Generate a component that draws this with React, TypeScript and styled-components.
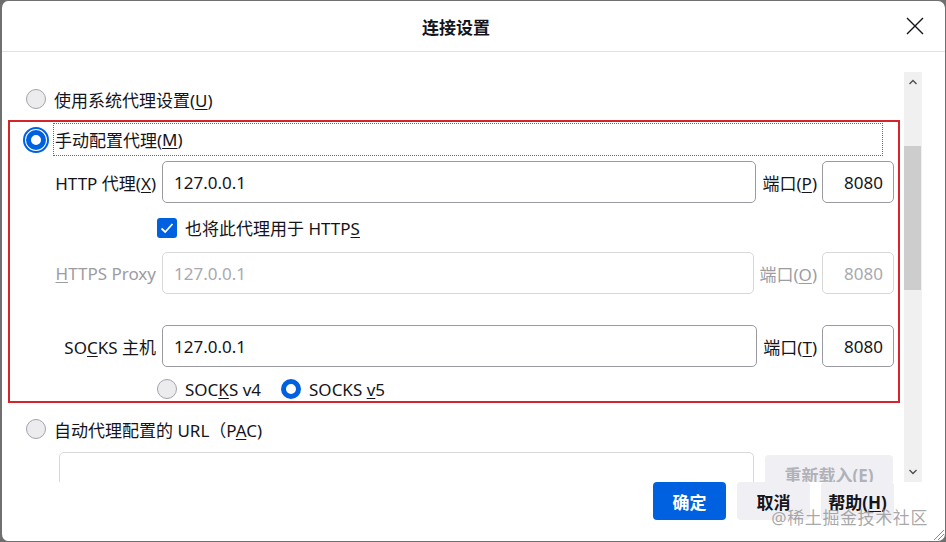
import styled, { createGlobalStyle } from 'styled-components';

const GlobalStyle = createGlobalStyle`
    html, body {
        margin: 0;
        padding: 0;
        background: #6e6e6e;
        overflow: hidden;
    }
    body {
        font-family: 'Noto Sans', 'Noto Sans CJK SC', sans-serif;
        font-size: 17px;
        color: #15141a;
    }
    * {
        box-sizing: border-box;
    }
    u {
        text-underline-offset: 2px;
    }
`;

const Dialog = styled.div`
    position: relative;
    width: 946px;
    height: 542px;
    background: #fff;
    border: 1px solid #707070;
    border-left-width: 2px;
    border-radius: 8px;
    display: flex;
    flex-direction: column;
    overflow: hidden;
`;

const Header = styled.header`
    height: 51px;
    flex-shrink: 0;
    display: flex;
    align-items: center;
    border-bottom: 1px solid #e0e0e6;
`;

const Title = styled.h1`
    flex: 1;
    margin: 0;
    padding-left: 6px;
    text-align: center;
    font-size: 17px;
    font-weight: 700;
`;

const CloseButton = styled.button`
    width: 22px;
    height: 22px;
    margin-right: 19px;
    padding: 0;
    border: none;
    background: none;
    display: flex;
    align-items: center;
    justify-content: center;
`;

const Main = styled.div`
    display: flex;
    margin-top: 20px;
    height: 410px;
    flex-shrink: 0;
`;

const Content = styled.div`
    flex: 1;
    overflow: hidden;
    padding: 12px 4px 0 6px;
`;

const Scrollbar = styled.div`
    width: 18px;
    margin-right: 23px;
    background: #f0f0f0;
    display: flex;
    flex-direction: column;
    align-items: stretch;
`;

const ScrollArrow = styled.div`
    height: 20px;
    display: flex;
    align-items: center;
    justify-content: center;
`;

const ScrollTrack = styled.div`
    flex: 1;
    padding: 54px 1px 0 0;
`;

const ScrollThumb = styled.div`
    height: 144px;
    background: #cdcdcd;
`;

const OptionRow = styled.div<{ $top?: number }>`
    display: flex;
    align-items: center;
    height: 30px;
    padding-left: 18px;
    margin-top: ${(p) => p.$top ?? 0}px;
    gap: 8px;
`;

const Radio = styled.span<{ $checked?: boolean; $focused?: boolean }>`
    width: 20px;
    height: 20px;
    flex-shrink: 0;
    border-radius: 50%;
    background: ${(p) => (p.$checked ? '#fff' : '#ececee')};
    border: ${(p) => (p.$checked ? '5px solid #0061e0' : '1px solid #a3a3ab')};
    outline: ${(p) => (p.$focused ? '2px solid #0061e0' : 'none')};
    outline-offset: 1px;
`;

const ManualBox = styled.section`
    margin-top: 6px;
    border: 2px solid #d3262c;
    padding: 1px 4px 0 16px;
`;

const FocusLabel = styled.label`
    flex: 1;
    margin-left: -1px;
    margin-right: 11px;
    height: 33px;
    padding-left: 1px;
    display: flex;
    align-items: center;
    border: 1px dotted #6a6a6a;
`;

const ManualRow = styled.div`
    display: flex;
    align-items: center;
    height: 33px;
    gap: 8px;
`;

const FieldRow = styled.div<{ $top?: number }>`
    display: flex;
    align-items: center;
    height: 42px;
    margin-top: ${(p) => p.$top ?? 0}px;
`;

const FieldLabel = styled.label<{ $disabled?: boolean }>`
    width: 130px;
    flex-shrink: 0;
    text-align: right;
    white-space: nowrap;
    color: ${(p) => (p.$disabled ? '#9c9ca3' : '#15141a')};
`;

const TextInput = styled.div<{ $disabled?: boolean }>`
    flex: 1;
    height: 42px;
    margin-left: 6px;
    padding-left: 11px;
    display: flex;
    align-items: center;
    border: 1px solid ${(p) => (p.$disabled ? '#d8d8dc' : '#9a9aa2')};
    border-radius: 5px;
    color: ${(p) => (p.$disabled ? '#a9a9b0' : '#15141a')};
`;

const PortLabel = styled.label<{ $disabled?: boolean }>`
    margin: 0 5px 0 6px;
    white-space: nowrap;
    color: ${(p) => (p.$disabled ? '#9c9ca3' : '#15141a')};
`;

const PortInput = styled.div<{ $disabled?: boolean }>`
    width: 72px;
    height: 42px;
    padding-right: 10px;
    display: flex;
    align-items: center;
    justify-content: flex-end;
    border: 1px solid ${(p) => (p.$disabled ? '#d8d8dc' : '#9a9aa2')};
    border-radius: 5px;
    color: ${(p) => (p.$disabled ? '#a9a9b0' : '#15141a')};
`;

const CheckRow = styled.div`
    display: flex;
    align-items: center;
    height: 49px;
    padding-left: 131px;
    gap: 8px;
`;

const CheckBox = styled.span`
    width: 20px;
    height: 20px;
    border-radius: 3px;
    background: #0061e0;
    display: flex;
    align-items: center;
    justify-content: center;
`;

const VersionRow = styled.div`
    display: flex;
    align-items: center;
    height: 24px;
    margin-top: 10px;
    padding-left: 131px;
`;

const VersionOption = styled.span`
    display: flex;
    align-items: center;
    gap: 8px;
    margin-right: 20px;
`;

const PacRow = styled.div`
    display: flex;
    align-items: flex-start;
    margin-top: 8px;
    padding-left: 51px;
    gap: 11px;
`;

const PacInput = styled.div`
    width: 695px;
    height: 42px;
    border: 1px solid #d8d8dc;
    border-radius: 5px;
`;

const ReloadButton = styled.button`
    width: 128px;
    height: 38px;
    margin-top: 3px;
    border: none;
    border-radius: 4px;
    background: #f0f0f4;
    color: #b1b1b8;
    font: inherit;
    font-weight: 700;
`;

const Footer = styled.footer`
    display: flex;
    justify-content: flex-end;
    gap: 11px;
    padding-right: 51px;
`;

const Button = styled.button<{ $primary?: boolean }>`
    width: 73px;
    height: 38px;
    padding: 0;
    border: none;
    border-radius: 4px;
    font: inherit;
    font-weight: 700;
    background: ${(p) => (p.$primary ? '#0061e0' : '#f0f0f4')};
    color: ${(p) => (p.$primary ? '#fff' : '#15141a')};
`;

const Watermark = styled.div`
    position: absolute;
    right: 17px;
    bottom: 12px;
    font-size: 17px;
    color: rgba(140, 140, 140, 0.75);
    letter-spacing: 0.6px;
    pointer-events: none;
`;

const Grip = styled.svg`
    position: absolute;
    right: 0;
    bottom: 0;
`;

const App = () => (
    <>
        <GlobalStyle />
        <Dialog>
            <Header>
                <Title>连接设置</Title>
                <CloseButton aria-label='关闭'>
                    <svg width='20' height='20' viewBox='0 0 20 20'>
                        <path d='M2 2 L18 18 M18 2 L2 18' stroke='#15141a' strokeWidth='1.4' />
                    </svg>
                </CloseButton>
            </Header>
            <Main>
                <Content>
                    <OptionRow>
                        <Radio />
                        <span>使用系统代理设置(<u>U</u>)</span>
                    </OptionRow>
                    <ManualBox>
                        <ManualRow>
                            <Radio $checked $focused />
                            <FocusLabel>手动配置代理(<u>M</u>)</FocusLabel>
                        </ManualRow>
                        <FieldRow $top={5}>
                            <FieldLabel>HTTP 代理(<u>X</u>)</FieldLabel>
                            <TextInput>127.0.0.1</TextInput>
                            <PortLabel>端口(<u>P</u>)</PortLabel>
                            <PortInput>8080</PortInput>
                        </FieldRow>
                        <CheckRow>
                            <CheckBox>
                                <svg width='14' height='14' viewBox='0 0 14 14'>
                                    <path d='M1.5 7.5 L5.2 11 L12.5 3' fill='none' stroke='#fff' strokeWidth='1.8' />
                                </svg>
                            </CheckBox>
                            <span>也将此代理用于 HTTP<u>S</u></span>
                        </CheckRow>
                        <FieldRow>
                            <FieldLabel $disabled><u>H</u>TTPS Proxy</FieldLabel>
                            <TextInput $disabled>127.0.0.1</TextInput>
                            <PortLabel $disabled>端口(<u>O</u>)</PortLabel>
                            <PortInput $disabled>8080</PortInput>
                        </FieldRow>
                        <FieldRow $top={31}>
                            <FieldLabel>SO<u>C</u>KS 主机</FieldLabel>
                            <TextInput>127.0.0.1</TextInput>
                            <PortLabel>端口(<u>T</u>)</PortLabel>
                            <PortInput>8080</PortInput>
                        </FieldRow>
                        <VersionRow>
                            <VersionOption>
                                <Radio />
                                <span>SOC<u>K</u>S v4</span>
                            </VersionOption>
                            <VersionOption>
                                <Radio $checked />
                                <span>SOCKS <u>v</u>5</span>
                            </VersionOption>
                        </VersionRow>
                    </ManualBox>
                    <OptionRow $top={11}>
                        <Radio />
                        <span>自动代理配置的 URL（P<u>A</u>C)</span>
                    </OptionRow>
                    <PacRow>
                        <PacInput />
                        <ReloadButton>重新载入(E)</ReloadButton>
                    </PacRow>
                </Content>
                <Scrollbar>
                    <ScrollArrow>
                        <svg width='10' height='8' viewBox='0 0 10 8'>
                            <path d='M1.5 6 L5 2.5 L8.5 6' fill='none' stroke='#505050' strokeWidth='1.4' />
                        </svg>
                    </ScrollArrow>
                    <ScrollTrack>
                        <ScrollThumb />
                    </ScrollTrack>
                    <ScrollArrow>
                        <svg width='10' height='8' viewBox='0 0 10 8'>
                            <path d='M1.5 2 L5 5.5 L8.5 2' fill='none' stroke='#505050' strokeWidth='1.4' />
                        </svg>
                    </ScrollArrow>
                </Scrollbar>
            </Main>
            <Footer>
                <Button $primary>确定</Button>
                <Button>取消</Button>
                <Button>帮助(<u>H</u>)</Button>
            </Footer>
            <Watermark>@稀土掘金技术社区</Watermark>
            <Grip width='14' height='14' viewBox='0 0 14 14'>
                <path d='M13 3 L3 13 M13 7 L7 13 M13 11 L11 13' stroke='#8a8a8a' strokeWidth='1' />
            </Grip>
        </Dialog>
    </>
);

export default App;
